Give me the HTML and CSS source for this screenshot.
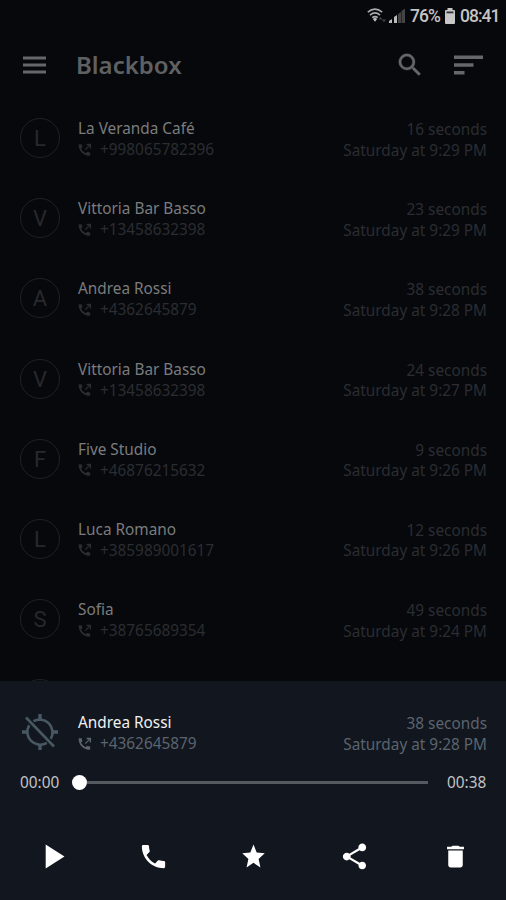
FILE: index.html
```
<!DOCTYPE html>
<html lang="en">
<head>
<meta charset="utf-8">
<title>Blackbox</title>
<link rel="stylesheet" href="styles.css">
</head>
<body>
<svg class="defs" aria-hidden="true">
  <symbol id="call-made" viewBox="0 0 14 14">
    <path d="M1.200 1.300h2.500l.7 3-1.400 1.500q1.600 3 4.500 4.500l1.500-1.400 3.200.7v2.600q-.3.6-1 .6C5.200 12.600.7 7.800.6 2q0-.7.6-.7z" fill="currentColor"/>
    <path d="M7.300 6.600 12 1.900M8.600 1.500h3.800v3.900" fill="none" stroke="currentColor" stroke-width="1.300"/>
  </symbol>
</svg>
<div class="screen">
  <div class="status">
    <svg class="wifi" width="20" height="16" viewBox="0 0 20 16">
      <g fill="none" stroke="#aaa" stroke-width="1.600"><path d="M.8 4.200Q8 -2 15.200 4.200"/><path d="M3 7.100Q8 2.800 13 7.100"/><path d="M5.200 9.700Q8 7.400 10.800 9.700"/></g>
      <path d="m5.800 11 2.200-1.400 2.200 1.400L8 13.800z" fill="#bbb"/>
      <path d="m11.500 11.500 2-2.500 2 2.500zM15 11.500h4l-2 2.800z" fill="#444"/>
    </svg>
    <svg class="signal" width="16" height="16" viewBox="0 0 16 16">
      <path d="M0 15v-2l3-2v4zM5 15V9l3-2v8z" fill="#bbb"/><path d="M9 15V6l3-2v11zM12.500 15V3L16 .5V15z" fill="#444"/>
    </svg>
    <span class="percent">76%</span>
    <svg class="battery" width="10" height="16" viewBox="0 0 10 16"><path d="M2.500 0h5v2H9q1 0 1 1v12q0 1-1 1H1q-1 0-1-1V3q0-1 1-1h1.500z" fill="#c7c7c7"/><path d="M1.500 3.500h7v1.800h-7z" fill="#333"/></svg>
    <span class="clock">08:41</span>
  </div>
  <div class="toolbar">
    <svg class="menu" width="23" height="18" viewBox="0 0 23 18"><path d="M0 .5h23v3H0zM0 7.500h23v3H0zM0 14.500h23v3H0z" fill="currentColor"/></svg>
    <h1>Blackbox</h1>
    <svg class="search" width="30" height="30" viewBox="0 0 24 24"><path fill="currentColor" stroke="currentColor" stroke-width=".3" d="M15.500 14h-.79l-.28-.27A6.471 6.471 0 0 0 16 9.500 6.500 6.500 0 1 0 9.500 16c1.610 0 3.090-.59 4.230-1.570l.27.28v.79l5 4.990L20.490 19l-4.990-5zm-6 0C7.010 14 5 11.990 5 9.500S7.010 5 9.500 5 14 7.010 14 9.500 11.990 14 9.500 14z"/></svg>
    <svg class="sort" width="29" height="20" viewBox="0 0 29 20"><path d="M0 .5h29v3.500H0zM0 8.200h19.500v3.600H0zM0 16h10.500v3.500H0z" fill="currentColor"/></svg>
  </div>
  <div class="list">
    <div class="row"><div class="avatar">L</div><div class="who"><div class="name">La Veranda Café</div><div class="num"><svg><use href="#call-made"/></svg><span>+998065782396</span></div></div><div class="when"><div>16 seconds</div><div>Saturday at 9:29 PM</div></div></div>
    <div class="row"><div class="avatar">V</div><div class="who"><div class="name">Vittoria Bar Basso</div><div class="num"><svg><use href="#call-made"/></svg><span>+13458632398</span></div></div><div class="when"><div>23 seconds</div><div>Saturday at 9:29 PM</div></div></div>
    <div class="row"><div class="avatar">A</div><div class="who"><div class="name">Andrea Rossi</div><div class="num"><svg><use href="#call-made"/></svg><span>+4362645879</span></div></div><div class="when"><div>38 seconds</div><div>Saturday at 9:28 PM</div></div></div>
    <div class="row"><div class="avatar">V</div><div class="who"><div class="name">Vittoria Bar Basso</div><div class="num"><svg><use href="#call-made"/></svg><span>+13458632398</span></div></div><div class="when"><div>24 seconds</div><div>Saturday at 9:27 PM</div></div></div>
    <div class="row"><div class="avatar">F</div><div class="who"><div class="name">Five Studio</div><div class="num"><svg><use href="#call-made"/></svg><span>+46876215632</span></div></div><div class="when"><div>9 seconds</div><div>Saturday at 9:26 PM</div></div></div>
    <div class="row"><div class="avatar">L</div><div class="who"><div class="name">Luca Romano</div><div class="num"><svg><use href="#call-made"/></svg><span>+385989001617</span></div></div><div class="when"><div>12 seconds</div><div>Saturday at 9:26 PM</div></div></div>
    <div class="row"><div class="avatar">S</div><div class="who"><div class="name">Sofia</div><div class="num"><svg><use href="#call-made"/></svg><span>+38765689354</span></div></div><div class="when"><div>49 seconds</div><div>Saturday at 9:24 PM</div></div></div>
    <div class="row"><div class="avatar"></div></div>
  </div>
  <div class="sheet">
    <div class="row current">
      <svg class="gps" width="40" height="40" viewBox="0 0 40 40"><g fill="none" stroke="#485862" stroke-width="2.600"><path d="M13.500 9.200A12.800 12.800 0 0 1 30.800 26.800M26.800 30.800A12.800 12.800 0 0 1 9.200 13.200"/><path d="M6 5.500 34 34.500"/><path stroke-width="3.400" d="M20 2v5M20 33v5M2 20h5M33 20h5"/></g></svg>
      <div class="who"><div class="name">Andrea Rossi</div><div class="num"><svg><use href="#call-made"/></svg><span>+4362645879</span></div></div>
      <div class="when"><div>38 seconds</div><div>Saturday at 9:28 PM</div></div>
    </div>
    <div class="seek"><span class="time">00:00</span><div class="track"><div class="thumb"></div><div class="line"></div></div><span class="time">00:38</span></div>
    <div class="actions">
      <svg width="41" height="41" viewBox="0 0 24 24"><path d="M8 5v14l11-7z"/></svg>
      <svg width="31" height="31" viewBox="0 0 24 24"><path d="M6.620 10.790c1.440 2.830 3.760 5.140 6.590 6.590l2.200-2.200c.27-.27.67-.36 1.020-.24 1.120.37 2.330.57 3.570.57.55 0 1 .45 1 1V20c0 .55-.45 1-1 1-9.390 0-17-7.610-17-17 0-.55.45-1 1-1h3.500c.55 0 1 .45 1 1 0 1.250.2 2.450.57 3.570.11.35.03.74-.25 1.020z"/></svg>
      <svg class="star" width="27" height="29" viewBox="0 0 24 24" preserveAspectRatio="none"><path d="M12 17.270 18.180 21l-1.640-7.030L22 9.240l-7.190-.61L12 2 9.190 8.630 2 9.240l5.460 4.730L5.820 21z"/></svg>
      <svg width="31" height="31" viewBox="0 0 24 24"><path d="M18 16.080c-.76 0-1.440.3-1.960.77L8.910 12.700c.05-.23.09-.46.09-.7s-.04-.47-.09-.7l7.050-4.110c.54.5 1.250.81 2.040.81 1.660 0 3-1.340 3-3s-1.340-3-3-3-3 1.340-3 3c0 .24.04.47.09.7L8.040 9.810C7.500 9.310 6.790 9 6 9c-1.660 0-3 1.340-3 3s1.340 3 3 3c.79 0 1.500-.31 2.040-.81l7.120 4.160c-.05.21-.08.43-.08.65 0 1.610 1.310 2.920 2.920 2.920s2.920-1.310 2.920-2.920-1.310-2.920-2.920-2.920z"/></svg>
      <svg width="29" height="29" viewBox="0 0 24 24"><path d="M6 19c0 1.100.9 2 2 2h8c1.100 0 2-.9 2-2V7H6zM19 4h-3.500l-1-1h-5l-1 1H5v2h14z"/></svg>
    </div>
  </div>
</div>
</body>
</html>
```
FILE: styles.css
```
* { box-sizing: border-box; }
body { margin: 0; background: #06080b; font-family: "Noto Sans", sans-serif; }
.defs { display: none; }
.screen { width: 506px; height: 900px; display: flex; flex-direction: column; overflow: hidden; background: #06080b; }
.status { flex: none; height: 32px; padding-right: 7px; display: flex; align-items: center; justify-content: flex-end; color: #c4c4c4; font: 500 17.5px/32px Roboto, sans-serif; letter-spacing: -1px; }
.wifi { margin-right: 2px; }
.signal { margin-right: 5px; }
.percent { width: 30px; margin-right: 5px; white-space: nowrap; }
.battery { margin-right: 5px; }
.clock { width: 39px; white-space: nowrap; }
.toolbar { flex: none; height: 66px; padding: 0 23px 0 23px; display: flex; align-items: center; color: #666769; }
.toolbar h1 { margin: 0 auto 0 30px; font-size: 24px; line-height: 32px; font-weight: 600; color: #5f6062; }
.search { margin-right: 29px; }
.list { flex: none; height: 583px; overflow: hidden; color: #2b2d32; }
.row { height: 80.2px; padding: 20px 19px 0 20px; display: flex; align-items: flex-start; }
.avatar { flex: none; width: 40px; height: 40px; border: 1.5px solid #1f2125; border-radius: 50%; text-align: center; font: 22px/39px Roboto, sans-serif; color: #26282c; }
.who { margin: 0 auto 0 18px; }
.name { font-size: 15.35px; line-height: 21px; color: #7b7c7e; white-space: nowrap; }
.num { display: flex; align-items: center; font-size: 15.35px; line-height: 21px; }
.num svg { width: 14px; height: 14px; margin-right: 8px; }
.when { font-size: 15.35px; line-height: 20.5px; text-align: right; padding-top: 1px; white-space: nowrap; }
.sheet { flex: 1; background: #12161e; padding-top: 11px; }
.current { height: 81px; color: #5b646f; }
.current .name { color: #f0f1f2; }
.seek { height: 18px; padding: 0 19px 0 20px; display: flex; align-items: center; color: #c1c3c6; }
.time { width: 40px; font-size: 15.35px; line-height: 18px; white-space: nowrap; }
.track { flex: 1; display: flex; align-items: center; margin: 0 19px 0 12px; }
.thumb { width: 15px; height: 15px; border-radius: 50%; background: #fff; }
.line { flex: 1; height: 3px; background: #555960; }
.actions { height: 130px; padding-left: 2px; display: grid; grid-template-columns: repeat(5, 1fr); place-items: center; fill: #fff; }
```
